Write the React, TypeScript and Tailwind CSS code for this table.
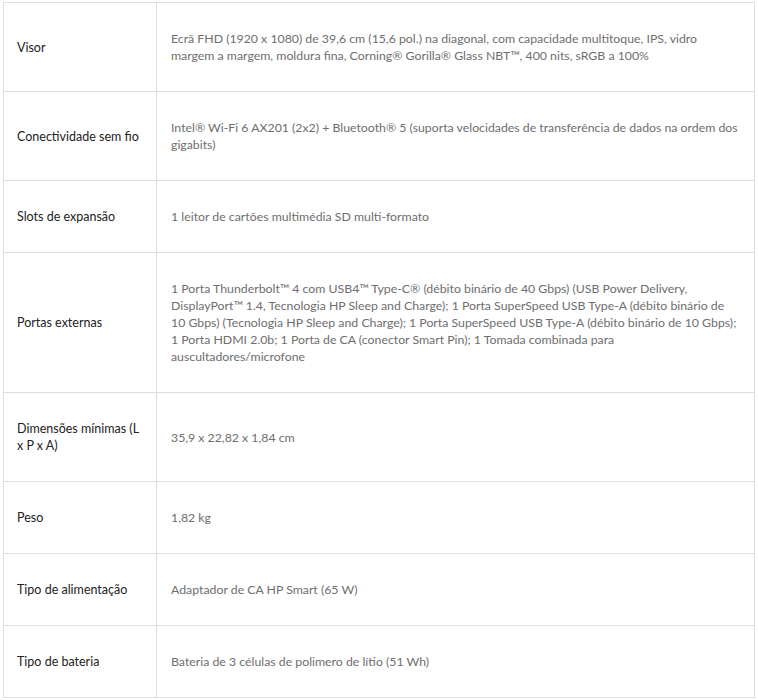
const rows: { label: string[]; value: string[] }[] = [
  {
    label: ['Visor'],
    value: [
      'Ecrã FHD (1920 x 1080) de 39,6 cm (15,6 pol.) na diagonal, com capacidade multitoque, IPS, vidro',
      'margem a margem, moldura fina, Corning® Gorilla® Glass NBT™, 400 nits, sRGB a 100%',
    ],
  },
  {
    label: ['Conectividade sem fio'],
    value: [
      'Intel® Wi-Fi 6 AX201 (2x2) + Bluetooth® 5 (suporta velocidades de transferência de dados na ordem dos',
      'gigabits)',
    ],
  },
  {
    label: ['Slots de expansão'],
    value: ['1 leitor de cartões multimédia SD multi-formato'],
  },
  {
    label: ['Portas externas'],
    value: [
      '1 Porta Thunderbolt™ 4 com USB4™ Type-C® (débito binário de 40 Gbps) (USB Power Delivery,',
      'DisplayPort™ 1.4, Tecnologia HP Sleep and Charge); 1 Porta SuperSpeed USB Type-A (débito binário de',
      '10 Gbps) (Tecnologia HP Sleep and Charge); 1 Porta SuperSpeed USB Type-A (débito binário de 10 Gbps);',
      '1 Porta HDMI 2.0b; 1 Porta de CA (conector Smart Pin); 1 Tomada combinada para',
      'auscultadores/microfone',
    ],
  },
  {
    label: ['Dimensões mínimas (L', 'x P x A)'],
    value: ['35,9 x 22,82 x 1,84 cm'],
  },
  { label: ['Peso'], value: ['1,82 kg'] },
  { label: ['Tipo de alimentação'], value: ['Adaptador de CA HP Smart (65 W)'] },
  { label: ['Tipo de bateria'], value: ['Bateria de 3 células de polimero de lítio (51 Wh)'] },
]

export default function App() {
  return (
    <div className="min-h-[700px] bg-white pl-[3px] pt-[2px] font-['Lato',sans-serif]">
      <table className="w-[752px] border-collapse border border-[#dedede]">
        <tbody>
          {rows.map((r, i) => (
            <tr key={i} className="border-b border-[#dedede]">
              <td className="w-[153px] border-r border-[#dedede] py-[27px] pl-[13px] pr-2 align-middle text-[12.5px] leading-[17px] text-[#222]">
                {r.label.map((l, j) => (
                  <div key={j} className="whitespace-nowrap">{l}</div>
                ))}
              </td>
              <td className="py-[27px] pl-[14px] pr-[14px] align-middle text-[12.3px] leading-[17px] text-[#6e6e6e]">
                {r.value.map((v, j) => (
                  <div key={j} className="whitespace-nowrap">{v}</div>
                ))}
              </td>
            </tr>
          ))}
        </tbody>
      </table>
    </div>
  )
}
